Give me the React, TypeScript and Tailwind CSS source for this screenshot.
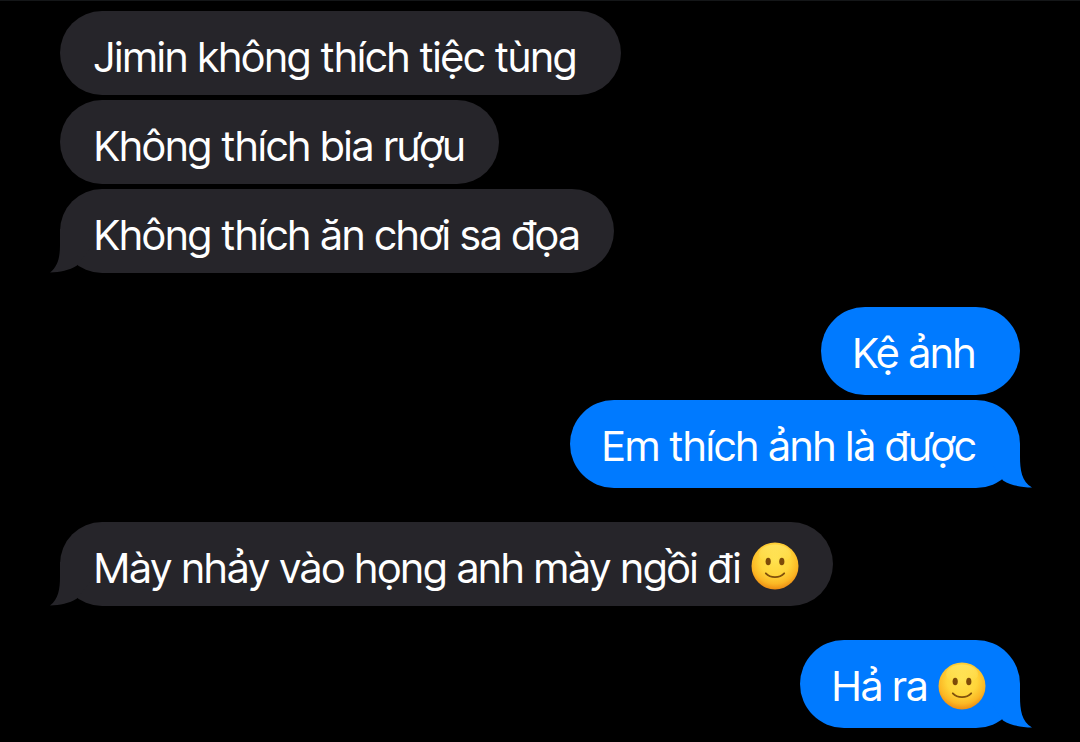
import type { ReactNode } from "react";
import clsx from "clsx";

type Side = "received" | "sent";

type Message = {
  text: string;
  smile?: boolean;
  roomy?: boolean;
};

type Group = {
  side: Side;
  messages: Message[];
};

const conversation: Group[] = [
  {
    side: "received",
    messages: [
      { text: "Jimin không thích tiệc tùng", roomy: true },
      { text: "Không thích bia rượu" },
      { text: "Không thích ăn chơi sa đọa" },
    ],
  },
  {
    side: "sent",
    messages: [
      { text: "Kệ ảnh", roomy: true },
      { text: "Em thích ảnh là được", roomy: true },
    ],
  },
  {
    side: "received",
    messages: [{ text: "Mày nhảy vào họng anh mày ngồi đi", smile: true }],
  },
  { side: "sent", messages: [{ text: "Hả ra", smile: true }] },
];

function Smile() {
  return (
    <svg
      viewBox="0 0 48 48"
      role="img"
      aria-label="🙂"
      className="ml-2.5 size-12 shrink-0"
    >
      <defs>
        <radialGradient id="face" cx="0.5" cy="0.38" r="0.64">
          <stop offset="0" stopColor="#ffe14e" />
          <stop offset="0.5" stopColor="#ffd53a" />
          <stop offset="0.78" stopColor="#fbb724" />
          <stop offset="1" stopColor="#ea8410" />
        </radialGradient>
        <linearGradient id="shine" x1="0" y1="0" x2="0" y2="1">
          <stop offset="0" stopColor="#fff07a" stopOpacity="0.5" />
          <stop offset="1" stopColor="#fff07a" stopOpacity="0" />
        </linearGradient>
      </defs>
      <circle cx="24" cy="24" r="23.5" fill="url(#face)" />
      <ellipse cx="24" cy="12" rx="16" ry="9.5" fill="url(#shine)" />
      <ellipse cx="17.2" cy="19.5" rx="2.6" ry="3.8" fill="#7d4a08" />
      <ellipse cx="30.8" cy="19.5" rx="2.6" ry="3.8" fill="#7d4a08" />
      <path
        d="M14.8 31.300C19.500 36.400 28.500 36.400 33.200 31.300"
        fill="none"
        stroke="#80500c"
        strokeWidth="1.8"
        strokeLinecap="round"
      />
    </svg>
  );
}

function Tail({ side }: { side: Side }) {
  return (
    <svg
      viewBox="0 0 40 44"
      aria-hidden="true"
      className={clsx(
        "absolute bottom-0 h-11 w-10",
        side === "received"
          ? "-left-2.5 fill-[#26252a]"
          : "-right-3 -scale-x-100 fill-[#007aff]",
      )}
    >
      {side === "received" ? (
        <path d="M10 0V15C10 27 8.500 37 0 43.500C10 43.200 19 41.500 27 36.500L40 20V0Z" />
      ) : (
        <path d="M12 0V13C12 25 10.500 38 0 43.500C11 43.200 21 41.500 29 36.500L40 20V0Z" />
      )}
    </svg>
  );
}

function Bubble({
  side,
  tail,
  smile,
  roomy,
  children,
}: {
  side: Side;
  tail: boolean;
  smile?: boolean;
  roomy?: boolean;
  children: ReactNode;
}) {
  return (
    <li
      className={clsx(
        "relative flex w-fit items-center rounded-[44px]",
        side === "received" ? "bg-[#26252a] pl-[34px]" : "bg-[#007aff] pl-8",
        roomy ? "pr-11" : "pr-[34px]",
      )}
    >
      {tail && <Tail side={side} />}
      <span
        className={clsx(
          "relative pt-[18px] leading-[56px]",
          side === "received" ? "pb-2.5" : "pb-3.5",
        )}
      >
        {children}
      </span>
      {smile && (
        <span className="relative pt-1">
          <Smile />
        </span>
      )}
    </li>
  );
}

export default function App() {
  return (
    <main className="flex min-h-screen flex-col gap-[34px] border-t border-[#141618] bg-black px-[60px] pt-2.5 pb-3 font-['Inter_Tight','Inter','Noto_Sans',sans-serif] text-[42px] text-white">
      {conversation.map((group, index) => (
        <ul
          key={index}
          className={clsx(
            "flex flex-col gap-[5px]",
            group.side === "received" ? "items-start" : "items-end",
          )}
        >
          {group.messages.map((message, position) => (
            <Bubble
              key={message.text}
              side={group.side}
              tail={position === group.messages.length - 1}
              smile={message.smile}
              roomy={message.roomy}
            >
              {message.text}
            </Bubble>
          ))}
        </ul>
      ))}
    </main>
  );
}
